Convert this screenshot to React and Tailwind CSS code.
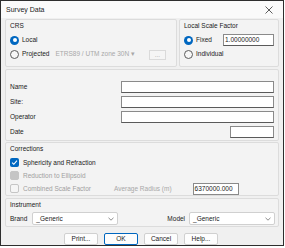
import React from "react";

const font = { fontFamily: '"Liberation Sans", Arial, sans-serif' };

const Radio = ({ checked, label }) => (
  <div className="flex items-center gap-[3px] h-[14px]">
    {checked ? (
      <span className="w-[9px] h-[9px] rounded-full bg-[#0067c0] flex items-center justify-center">
        <span className="w-[4px] h-[4px] rounded-full bg-white" />
      </span>
    ) : (
      <span className="w-[9px] h-[9px] rounded-full border border-[#5c5c5c] bg-[#f7f7f7]" />
    )}
    <span>{label}</span>
  </div>
);

const Check = ({ state, label, disabled }) => (
  <div className={`flex items-center gap-[4px] h-[13px] ${disabled ? "text-[#a0a0a0]" : ""}`}>
    {state === "on" ? (
      <span className="w-[9px] h-[9px] rounded-[2px] bg-[#0067c0] flex items-center justify-center">
        <svg width="7" height="7" viewBox="0 0 8 8">
          <path d="M1.2 4.2 L3.2 6 L6.8 1.8" stroke="white" strokeWidth="1.2" fill="none" />
        </svg>
      </span>
    ) : state === "dis" ? (
      <span className="w-[9px] h-[9px] rounded-[2px] bg-[#c5c5c5] border border-[#c5c5c5]" />
    ) : (
      <span className="w-[9px] h-[9px] rounded-[2px] border border-[#c5c5c5] bg-[#f5f5f5]" />
    )}
    <span>{label}</span>
  </div>
);

const Group = ({ title, className, children }) => (
  <div className={`border border-[#dcdcdc] rounded-[2px] bg-[#f3f3f3] ${className}`}>
    <div className="h-[9px] leading-[9px] px-[4px] mt-[1px]">{title}</div>
    {children}
  </div>
);

const Field = ({ label, box }) => (
  <div className="flex items-center justify-between h-[15px]">
    <span>{label}</span>
    {box}
  </div>
);

const TextBox = ({ w, value = "" }) => (
  <div className={`${w} h-[12px] bg-white border border-[#8a8a8a] border-b-[#5a5a5a] leading-[10px] px-[1px]`}>
    {value}
  </div>
);

const Select = ({ w }) => (
  <div className={`${w} h-[13px] bg-white border border-[#d0d0d0] rounded-[2px] flex items-center justify-between px-[3px]`}>
    <span>_Generic</span>
    <svg width="6" height="4" viewBox="0 0 6 4">
      <path d="M0.5 0.8 L3 3.2 L5.5 0.8" stroke="#707070" strokeWidth="0.8" fill="none" />
    </svg>
  </div>
);

const Btn = ({ label, def }) => (
  <div
    className={`w-[34px] h-[12px] rounded-[2px] bg-[#fdfdfd] flex items-center justify-center ${
      def ? "border border-[#0067c0]" : "border border-[#d0d0d0]"
    }`}
  >
    {label}
  </div>
);

export default function App() {
  return (
    <div className="w-[285px] h-[248px] bg-white text-[6.5px] text-[#1a1a1a]" style={font}>
      <div className="w-[284px] h-[246px] border border-[#2e2e2e] bg-[#f0f0f0] flex flex-col">
        <div className="h-[19px] bg-[#fafafa] flex items-center justify-between pl-[5px] pr-[10px] pt-[1px]">
          <span className="text-[7px]">Survey Data</span>
          <svg width="8" height="8" viewBox="0 0 8 8">
            <path d="M0.5 0.5 L7.5 7.5 M7.5 0.5 L0.5 7.5" stroke="#333" strokeWidth="0.8" />
          </svg>
        </div>

        <div className="flex flex-col px-[4px] pt-[1px]">
          <div className="flex gap-[2px] h-[48px]">
            <Group title="CRS" className="w-[172px]">
              <div className="px-[4px] pt-[3px]">
                <Radio checked label="Local" />
                <div className="flex items-center">
                  <Radio label="Projected" />
                  <span className="ml-[6px] text-[#a8a8a8]">ETRS89 / UTM zone 30N ▾</span>
                  <div className="ml-[14px] mt-[2px] w-[17px] h-[10px] border border-[#dadada] bg-[#f5f5f5] text-[#b0b0b0] flex items-center justify-center leading-none">
                    ...
                  </div>
                </div>
              </div>
            </Group>
            <Group title="Local Scale Factor" className="flex-1">
              <div className="px-[4px] pt-[3px]">
                <div className="flex items-center justify-between">
                  <Radio checked label="Fixed" />
                  <TextBox w="w-[51px]" value="1.00000000" />
                </div>
                <Radio label="Individual" />
              </div>
            </Group>
          </div>

          <div className="mt-[2px] h-[72px] border border-[#dcdcdc] rounded-[2px] bg-[#f3f3f3] px-[4px] pt-[9px]">
            <Field label="Name" box={<TextBox w="w-[153px]" />} />
            <Field label="Site:" box={<TextBox w="w-[153px]" />} />
            <Field label="Operator" box={<TextBox w="w-[153px]" />} />
            <Field label="Date" box={<TextBox w="w-[44px]" />} />
          </div>

          <Group title="Corrections" className="mt-[1px] h-[54px]">
            <div className="px-[4px] pt-[3px]">
              <Check state="on" label="Sphericity and Refraction" />
              <Check state="dis" label="Reduction to Ellipsoid" disabled />
              <div className="flex items-center">
                <Check state="off" label="Combined Scale Factor" disabled />
                <span className="ml-[23px] text-[#a8a8a8]">Average Radius (m)</span>
                <div className="ml-[21px] w-[46px] h-[12px] bg-white border border-[#8a8a8a] leading-[10px] px-[1px]">
                  6370000.000
                </div>
              </div>
            </div>
          </Group>

          <Group title="Instrument" className="mt-[2px] h-[29px]">
            <div className="flex items-center px-[4px] pt-[3px]">
              <span>Brand</span>
              <div className="ml-[5px]">
                <Select w="w-[86px]" />
              </div>
              <span className="ml-[49px]">Model</span>
              <div className="ml-[4px]">
                <Select w="w-[86px]" />
              </div>
            </div>
          </Group>

          <div className="flex justify-center gap-[6px] mt-[6px] pr-[2px]">
            <Btn label="Print..." />
            <Btn label="OK" def />
            <Btn label="Cancel" />
            <Btn label="Help..." />
          </div>
        </div>
      </div>
    </div>
  );
}
